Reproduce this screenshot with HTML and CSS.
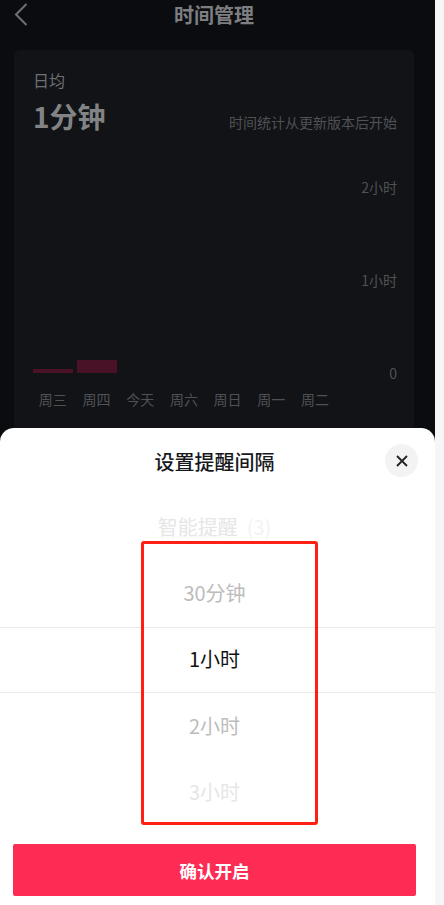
FILE: index.html
```html
<!DOCTYPE html>
<html lang="zh-CN">
<head>
  <meta charset="UTF-8">
  <meta name="viewport" content="width=device-width, initial-scale=1.0">
  <title>时间管理</title>
  <link rel="stylesheet" href="styles.css">
</head>
<body>
  <div class="screen">
    <div class="top-bar">
      <svg class="back-icon" width="14" height="23" viewBox="0 0 14 23">
        <path d="M12.5 1 L2 11.5 L12.5 22" fill="none" stroke="#707174" stroke-width="2"/>
      </svg>
      <h1 class="top-title">时间管理</h1>
    </div>

    <div class="card">
      <p class="avg-label">日均</p>
      <div class="stat-row">
        <span class="avg-value">1分钟</span>
        <span class="stat-note">时间统计从更新版本后开始</span>
      </div>
      <div class="chart">
        <div class="plot">
          <div class="bar-slot"><div class="bar" style="height: 4px"></div></div>
          <div class="bar-slot"><div class="bar" style="height: 13px"></div></div>
          <div class="bar-slot"></div>
          <div class="bar-slot"></div>
          <div class="bar-slot"></div>
          <div class="bar-slot"></div>
          <div class="bar-slot"></div>
        </div>
        <div class="axis">
          <span>2小时</span>
          <span>1小时</span>
          <span>0</span>
        </div>
      </div>
      <div class="days">
        <span>周三</span>
        <span>周四</span>
        <span>今天</span>
        <span>周六</span>
        <span>周日</span>
        <span>周一</span>
        <span>周二</span>
      </div>
    </div>

    <div class="sheet">
      <div class="sheet-head">
        <h2 class="sheet-title">设置提醒间隔</h2>
        <button class="close-btn">
          <svg width="12" height="12" viewBox="0 0 12 12">
            <path d="M1 1 L11 11 M11 1 L1 11" fill="none" stroke="#222" stroke-width="1.8"/>
          </svg>
        </button>
      </div>
      <div class="wheel">
        <div class="wheel-item far">智能提醒<span class="wheel-count">(3)</span></div>
        <div class="wheel-item near">30分钟</div>
        <div class="wheel-item selected">1小时</div>
        <div class="wheel-item near">2小时</div>
        <div class="wheel-item fading">3小时</div>
      </div>
      <button class="confirm-btn">确认开启</button>
    </div>

    <!-- 红色标注框 -->
    <div class="highlight-box"></div>
  </div>
</body>
</html>
```

FILE: styles.css
```css
body {
  margin: 0;
  background: #f6f6f6;
  font-family: "Noto Sans CJK SC", "Liberation Sans", sans-serif;
}

h1, h2, p {
  margin: 0;
}

.screen {
  position: relative;
  display: flex;
  flex-direction: column;
  width: 435px;
  height: 905px;
  padding: 0 21px 0 14px;
  box-sizing: border-box;
  background: #0a0c10;
  overflow: hidden;
}

.top-bar {
  position: relative;
  flex: none;
  height: 30px;
  text-align: center;
}

.back-icon {
  position: absolute;
  left: 0;
  top: 3px;
}

.top-title {
  font-size: 20px;
  font-weight: 700;
  line-height: 30px;
  color: #7d7e80;
}

/* 背景卡片 */
.card {
  flex: 1;
  margin-top: 20px;
  padding: 19px 17px 0 19px;
  background: #111317;
  border-radius: 6px;
}

.avg-label {
  font-size: 16px;
  line-height: 22px;
  color: #6f7073;
}

.stat-row {
  display: flex;
  justify-content: space-between;
  align-items: flex-end;
  margin-top: 5px;
}

.avg-value {
  font-size: 28px;
  font-weight: 700;
  line-height: 40px;
  color: #828385;
}

.stat-note {
  margin-bottom: 4px;
  font-size: 14px;
  line-height: 20px;
  color: #505154;
}

.chart {
  display: flex;
  justify-content: space-between;
  height: 206px;
  margin-top: 41px;
}

.plot {
  display: grid;
  grid-template-columns: repeat(7, 43.7px);
  align-items: end;
  height: 196px;
}

.bar {
  width: 40px;
  background: #4a1226;
}

.axis {
  display: flex;
  flex-direction: column;
  justify-content: space-between;
  align-items: flex-end;
  font-size: 14px;
  line-height: 20px;
  color: #505154;
}

.days {
  display: grid;
  grid-template-columns: repeat(7, 43.7px);
  margin: 6px 0 0 -2px;
  font-size: 14px;
  line-height: 20px;
  text-align: center;
  color: #505154;
}

/* 底部弹层 */
.sheet {
  position: absolute;
  left: 0;
  right: 0;
  bottom: 0;
  height: 477px;
  background: #fff;
  border-radius: 14px 14px 0 0;
}

.sheet-head {
  display: flex;
  justify-content: center;
  align-items: center;
  position: relative;
  height: 66px;
  padding-right: 6px;
}

.sheet-title {
  font-size: 20px;
  font-weight: 500;
  color: #16181c;
}

.close-btn {
  position: absolute;
  right: 17px;
  top: 16px;
  display: flex;
  justify-content: center;
  align-items: center;
  width: 33px;
  height: 33px;
  padding: 0;
  background: #f3f3f4;
  border: none;
  border-radius: 50%;
}

.wheel-item {
  height: 66px;
  padding-right: 6px;
  font-size: 20px;
  line-height: 66px;
  text-align: center;
}

.wheel-item.far {
  color: #e6e6e6;
}

.wheel-count {
  margin-left: 9px;
  color: #f3f3f3;
}

.wheel-item.near {
  color: #bcbcbc;
}

.wheel-item.selected {
  box-sizing: border-box;
  margin-top: 1px;
  border-top: 1px solid #e9e9e9;
  border-bottom: 1px solid #e9e9e9;
  line-height: 62px;
  color: #111;
}

.wheel-item.fading {
  color: #e6e6e6;
}

.confirm-btn {
  display: block;
  width: 403px;
  height: 52px;
  margin: 19px 0 0 13px;
  padding: 0;
  background: #fe2c55;
  border: none;
  border-radius: 2px;
  font-family: inherit;
  font-size: 17.5px;
  font-weight: 700;
  color: #fff;
}

.highlight-box {
  position: absolute;
  left: 141px;
  top: 541px;
  width: 177px;
  height: 284px;
  box-sizing: border-box;
  border: 3px solid #ff2015;
  border-radius: 3px;
}
```
